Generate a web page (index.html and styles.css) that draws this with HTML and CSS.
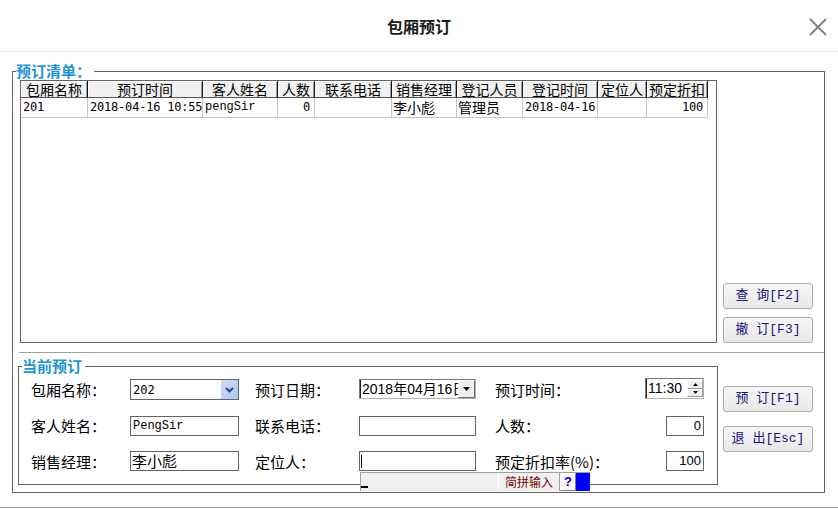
FILE: index.html
```html
<!DOCTYPE html>
<html lang="zh-CN">
<head>
<meta charset="utf-8">
<title>包厢预订</title>
<link rel="stylesheet" href="styles.css">
</head>
<body>
<header class="titlebar">
  <h1 class="title">包厢预订</h1>
  <button class="close" type="button" aria-label="关闭">
    <svg width="18" height="18" viewBox="0 0 18 18"><path d="M1 1L17 17M17 1L1 17" stroke="#7f7f7f" stroke-width="1.8" fill="none"/></svg>
  </button>
</header>

<fieldset class="outer">
  <legend class="legend">预订清单：</legend>
  <section class="upper">
    <div class="grid-box">
      <table class="list">
        <thead>
          <tr><th>包厢名称</th><th>预订时间</th><th>客人姓名</th><th>人数</th><th>联系电话</th><th>销售经理</th><th>登记人员</th><th>登记时间</th><th>定位人</th><th>预定折扣</th></tr>
        </thead>
        <tbody>
          <tr><td>201</td><td>2018-04-16 10:55</td><td class="en">pengSir</td><td class="r">0</td><td></td><td class="cj">李小彪</td><td class="cj">管理员</td><td>2018-04-16</td><td></td><td class="r">100</td></tr>
        </tbody>
      </table>
    </div>
    <div class="btn-col btn-col-upper">
      <button class="btn" type="button">查 询[F2]</button>
      <button class="btn" type="button">撤 订[F3]</button>
    </div>
  </section>

  <section class="lower">
    <fieldset class="group">
      <legend class="legend">当前预订</legend>
      <div class="form">
        <span class="label">包厢名称：</span>
        <div class="combo"><span class="num">202</span><span class="combo-btn"><svg width="9" height="6" viewBox="0 0 9 6"><path d="M1 1l3.5 3.5L8 1" fill="none" stroke="#2b4d8c" stroke-width="2"/></svg></span></div>
        <span class="label label-mid">预订日期：</span>
        <div class="date"><span class="date-text">2018年04月16日</span><span class="drop-btn"><svg width="7" height="4" viewBox="0 0 7 4"><path d="M0 0h7L3.5 4z" fill="#000"/></svg></span></div>
        <span class="label label-right">预订时间：</span>
        <div class="time"><span class="time-text">11:30</span><span class="spin"><span class="spin-half"><svg width="5" height="3" viewBox="0 0 5 3"><path d="M2.5 0L5 3H0z" fill="#000"/></svg></span><span class="spin-half"><svg width="5" height="3" viewBox="0 0 5 3"><path d="M0 0h5L2.5 3z" fill="#000"/></svg></span></span></div>

        <span class="label">客人姓名：</span>
        <div class="field en">PengSir</div>
        <span class="label label-mid">联系电话：</span>
        <div class="field field-mid"></div>
        <span class="label label-right">人数：</span>
        <div class="field field-short">0</div>

        <span class="label">销售经理：</span>
        <div class="field cj-field">李小彪</div>
        <span class="label label-mid">定位人：</span>
        <div class="field field-mid caret-field"><span class="caret"></span></div>
        <span class="label label-right">预定折扣率(%)：</span>
        <div class="field field-short">100</div>
      </div>
    </fieldset>
    <div class="btn-col btn-col-lower">
      <button class="btn" type="button">预 订[F1]</button>
      <button class="btn" type="button">退 出[Esc]</button>
    </div>
  </section>
</fieldset>

<div class="bottom-line"></div>

<div class="ime" aria-hidden="true">
  <span class="ime-comp"><span class="ime-caret"></span></span>
  <span class="ime-mode">简拼输入</span>
  <span class="ime-help">?</span>
  <span class="ime-color"></span>
</div>
</body>
</html>
```

FILE: styles.css
```css
* { box-sizing: border-box; }

html, body {
  margin: 0;
  padding: 0;
  background: #fff;
}

body {
  position: relative;
  width: 838px;
  height: 509px;
  overflow: hidden;
  font-family: "Noto Sans CJK SC", sans-serif;
  font-size: 15px;
  color: #000;
}

/* title bar */
.titlebar {
  height: 52px;
  border-bottom: 1px solid #e4e4e4;
  display: grid;
  grid-template-columns: 1fr auto 1fr;
  align-items: center;
}

.title {
  grid-column: 2;
  margin: 0;
  font-size: 16px;
  font-weight: bold;
  line-height: 20px;
  color: #1b1b1b;
}

.close {
  grid-column: 3;
  justify-self: end;
  align-self: start;
  margin: 18px 11px 0 0;
  width: 18px;
  height: 18px;
  padding: 0;
  border: 0;
  background: none;
  display: block;
}
.close svg { display: block; }

/* group boxes */
.outer {
  margin: 11px 13px 0 12px;
  padding: 0;
  border: 1px solid #646464;
  min-width: 0;
}

.legend {
  margin-left: 3px;
  padding: 0 3px 2px 0;
  font-size: 15px;
  font-weight: bold;
  line-height: 15px;
  color: #1c95d2;
}

.upper {
  display: flex;
  margin: 0 0 0 6px;
  padding: 0 0 9px 1px;
  border-bottom: 1px solid #a0a0a0;
}

.grid-box {
  flex: none;
  width: 697px;
  height: 263px;
  border: 1px solid #646464;
  background: #fff;
  overflow: hidden;
}

/* list table */
.list {
  table-layout: fixed;
  width: 687px;
  border-collapse: separate;
  border-spacing: 0;
}

.list th {
  height: 17px;
  padding: 0;
  background: #f0f0f0;
  border-right: 1px solid #111;
  border-bottom: 1px solid #555;
  box-shadow: inset 1px 1px 0 #fff, inset -1px 0 0 #a0a0a0;
  font-weight: normal;
  font-size: 14px;
  line-height: 16px;
  text-align: center;
  white-space: nowrap;
}

.list th:nth-child(1) { width: 67px; }
.list th:nth-child(2) { width: 115px; }
.list th:nth-child(3) { width: 75px; }
.list th:nth-child(4) { width: 37px; }
.list th:nth-child(5) { width: 77px; }
.list th:nth-child(6) { width: 65px; }
.list th:nth-child(7) { width: 66px; }
.list th:nth-child(8) { width: 75px; }
.list th:nth-child(9) { width: 49px; }
.list th:nth-child(10) { width: 61px; }

.list td {
  height: 20px;
  padding: 0 4px 0 2px;
  border-right: 1px solid #c6c6c6;
  border-bottom: 1px solid #c6c6c6;
  font-family: "DejaVu Sans Mono", "Noto Sans CJK SC", monospace;
  font-size: 12px;
  letter-spacing: -0.2px;
  line-height: 19px;
  white-space: nowrap;
  overflow: hidden;
}

.list td.cj {
  font-family: "Noto Sans CJK SC", sans-serif;
  font-size: 14px;
  letter-spacing: 0;
  padding-left: 1px;
}

.list td.en {
  font-family: "Liberation Mono", monospace;
  font-size: 12px;
  letter-spacing: 0;
}

.list td.r { text-align: right; }

/* buttons */
.btn-col {
  flex: none;
  width: 90px;
  display: flex;
  flex-direction: column;
}

.btn-col-upper {
  margin-left: 6px;
  justify-content: flex-end;
  gap: 8px;
}

.btn-col-lower {
  margin-left: 5px;
  padding-top: 33px;
  gap: 14px;
}

.btn {
  width: 90px;
  height: 26px;
  padding: 0;
  border: 1px solid #acacac;
  border-radius: 3px;
  background: linear-gradient(#f7f7f7, #e8e8e8);
  color: #16167c;
  font-family: "Liberation Mono", "Noto Sans CJK SC", monospace;
  font-size: 13px;
  line-height: 16px;
  white-space: pre;
}

/* lower area */
.lower { display: flex; }

.group {
  flex: none;
  width: 700px;
  margin: 5px 0 7px 5px;
  padding: 0;
  border: 1px solid #646464;
  min-width: 0;
}

.form {
  display: grid;
  grid-template-columns: 99px 109px 120px 117px 1fr auto;
  grid-template-rows: 22px 20px 21px;
  row-gap: 15px;
  align-items: start;
  padding: 4px 13px 12px 12px;
}

.label {
  align-self: center;
  line-height: 20px;
  white-space: nowrap;
}
.label-mid { padding-left: 16px; }
.label-right { padding-left: 19px; }

.num {
  font-family: "DejaVu Sans Mono", monospace;
  font-size: 12px;
}

.field {
  height: 20px;
  border: 1px solid #646464;
  background: #fff;
  padding: 0 2px;
  line-height: 18px;
  white-space: nowrap;
  overflow: hidden;
  font-family: "Liberation Sans", "Noto Sans CJK SC", sans-serif;
  font-size: 13px;
}

.field.en {
  font-family: "Liberation Mono", monospace;
  font-size: 12px;
  line-height: 18px;
}

.field.cj-field {
  font-family: "Noto Sans CJK SC", sans-serif;
  font-size: 15px;
  padding-left: 1px;
}

.field-short {
  width: 38px;
  justify-self: end;
  text-align: right;
}

.caret-field {
  padding-left: 1px;
  display: flex;
  align-items: center;
}

.caret {
  display: block;
  width: 1px;
  height: 13px;
  background: #000;
}

/* combo box */
.combo {
  height: 21px;
  border: 1px solid #646464;
  background: #fff;
  display: flex;
  align-items: center;
  padding: 0 0 0 2px;
}

.combo-btn {
  margin-left: auto;
  width: 17px;
  height: 19px;
  background: linear-gradient(135deg, #dcd7fb 0%, #c3cef6 50%, #a7cdf2 100%);
  display: flex;
  align-items: center;
  justify-content: center;
}
.combo-btn svg { display: block; }

/* date picker */
.date {
  height: 20px;
  border: 1px solid #7a7a7a;
  border-right-color: #b0b0b0;
  border-bottom-color: #b0b0b0;
  box-shadow: inset 1px 0 0 #222;
  background: #fff;
  display: flex;
}

.date-text {
  flex: 1;
  min-width: 0;
  overflow: hidden;
  white-space: nowrap;
  padding-left: 2px;
  font-family: "Liberation Sans", "Noto Sans CJK SC", sans-serif;
  font-size: 14px;
  line-height: 18px;
}

.drop-btn {
  flex: none;
  width: 17px;
  height: 18px;
  background: #f0f0f0;
  border: 1px solid;
  border-color: #fff #6e6e6e #6e6e6e #fff;
  display: flex;
  align-items: center;
  justify-content: center;
}
.drop-btn svg { display: block; }

/* time picker */
.time {
  width: 59px;
  height: 21px;
  margin-top: -1px;
  justify-self: end;
  border: 1px solid #7a7a7a;
  border-right-color: #b0b0b0;
  border-bottom-color: #b0b0b0;
  box-shadow: inset 1px 0 0 #222;
  background: #fff;
  display: flex;
}

.time-text {
  flex: 1;
  padding-left: 2px;
  font-family: "Liberation Sans", sans-serif;
  font-size: 14px;
  line-height: 19px;
}

.spin {
  flex: none;
  width: 16px;
  display: flex;
  flex-direction: column;
  padding: 1px 0;
}

.spin-half {
  flex: 1;
  background: #f0f0f0;
  border: 1px solid;
  border-color: #fff #9a9a9a #9a9a9a #fff;
  display: flex;
  align-items: center;
  justify-content: center;
}
.spin-half svg { display: block; }

/* window bottom edge */
.bottom-line {
  margin-top: 14px;
  border-top: 1px solid #a8a8a8;
}

/* floating IME status bar */
.ime {
  position: absolute;
  left: 360px;
  top: 472px;
  width: 230px;
  height: 19px;
  display: flex;
  border-top: 1px solid #a0a0a0;
  background: #f0f0f0;
}

.ime-comp {
  width: 138px;
  border-left: 1px solid #a0a0a0;
  display: flex;
  align-items: flex-end;
  padding: 0 0 3px 0;
}

.ime-caret {
  display: block;
  width: 7px;
  height: 2px;
  background: #000;
}

.ime-mode {
  width: 62px;
  border-left: 1px solid #fff;
  border-right: 1px solid #a0a0a0;
  color: #7d0000;
  font-size: 12px;
  line-height: 18px;
  text-align: center;
}

.ime-help {
  width: 16px;
  background: #f7f7f7;
  border: 1px solid;
  border-color: #fff #808080 #808080 #fff;
  color: #0000d0;
  font-family: "Liberation Sans", sans-serif;
  font-weight: bold;
  font-size: 13px;
  line-height: 15px;
  text-align: center;
}

.ime-color {
  width: 14px;
  background: #0000ff;
}
```
